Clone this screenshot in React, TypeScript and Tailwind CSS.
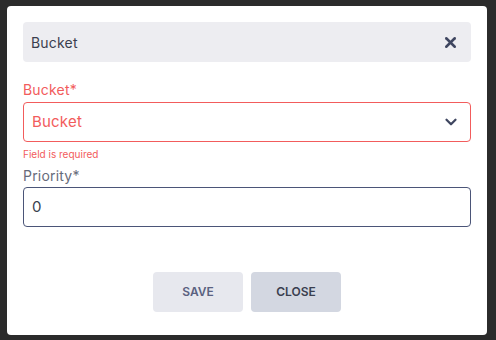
import { X, ChevronDown } from "lucide-react";

const App = () => {
  return (
    <div className="w-[496px] h-[340px] bg-[#2b2b2b] pt-[6px] pl-[7px] font-['Inter',sans-serif]">
      <div className="w-[480px] h-[329px] bg-white rounded-[4px] px-4 pt-4 flex flex-col">
        <div className="h-10 bg-[#ededf1] rounded-[4px] flex items-center justify-between pl-2 pr-[12px]">
          <span className="text-[14px] tracking-[0.2px] text-[#3a3f4f]">Bucket</span>
          <X className="w-[17px] h-[17px] text-[#3f4660]" strokeWidth={3.5} />
        </div>
        <div className="mt-[18px] text-[14px] leading-5 tracking-[0.2px] text-[#f25c5c]">Bucket*</div>
        <div className="mt-[2px] h-10 border border-[#f25c5c] rounded-[4px] flex items-center justify-between pl-2 pr-[10px]">
          <span className="text-[15px] tracking-[0.2px] text-[#f25c5c]">Bucket</span>
          <ChevronDown className="w-[18px] h-[18px] text-[#3f4660]" strokeWidth={3} />
        </div>
        <div className="mt-[6px] text-[10px] leading-3 text-[#f25c5c]">Field is required</div>
        <div className="mt-[6px] text-[14px] leading-5 tracking-[0.2px] text-[#666b7a]">Priority*</div>
        <div className="mt-[1px] h-10 border border-[#4b5578] rounded-[4px] flex items-center pl-2">
          <span className="text-[15px] text-[#3a3f4f]">0</span>
        </div>
        <div className="mt-[45px] flex justify-center gap-2">
          <button className="w-[90px] h-10 rounded-[4px] bg-[#e7e8ee] text-[12px] font-semibold text-[#5a6180]">SAVE</button>
          <button className="w-[90px] h-10 rounded-[4px] bg-[#d3d7e1] text-[12px] font-semibold text-[#3a3f4f]">CLOSE</button>
        </div>
      </div>
    </div>
  );
};

export default App;
